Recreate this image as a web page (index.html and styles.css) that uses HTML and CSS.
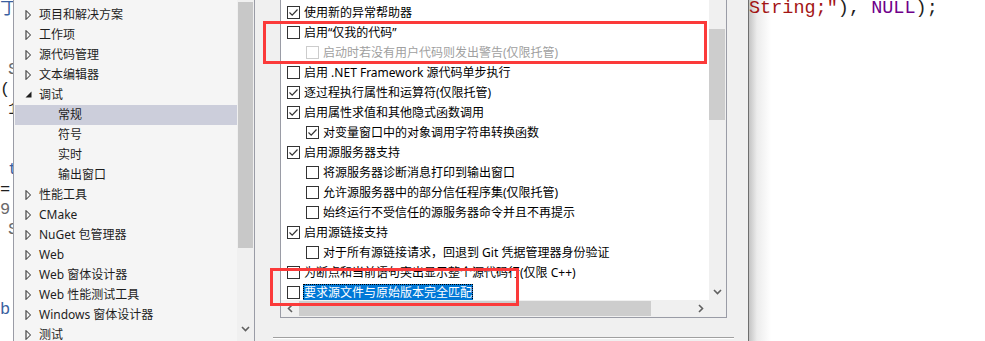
FILE: index.html
```html
<!DOCTYPE html>
<html lang="zh-CN">
<head>
    <meta charset="UTF-8">
    <title>选项 - 调试</title>
    <link rel="stylesheet" href="styles.css">
</head>
<body>
    <div class="screen">
        <!-- editor behind the dialog, left side -->
        <div class="code-left">
            <div class="cl-line"><span class="c-blue">丁</span></div>
            <div class="cl-line"></div>
            <div class="cl-line"></div>
            <div class="cl-line"><span class="c-gray ind">S</span></div>
            <div class="cl-line"><span class="c-dark">(</span></div>
            <div class="cl-line"><span class="c-dark ind">1</span></div>
            <div class="cl-line"></div>
            <div class="cl-line"></div>
            <div class="cl-line"><span class="c-blue ind">t</span></div>
            <div class="cl-line"><span class="c-dark">=</span></div>
            <div class="cl-line"><span class="c-gray">9</span></div>
            <div class="cl-line"><span class="c-gray ind">S</span></div>
            <div class="cl-line"></div>
            <div class="cl-line"></div>
            <div class="cl-line"></div>
            <div class="cl-line"><span class="c-blue">b</span></div>
        </div>

        <!-- options tree -->
        <div class="tree-pane">
            <ul class="tree">
                <li><span class="arrow"><svg width="7" height="10" viewBox="0 0 7 10"><polygon points="1,0.5 5.5,5 1,9.5" fill="none" stroke="#1e1e1e" stroke-width="1"/></svg></span>项目和解决方案</li>
                <li><span class="arrow"><svg width="7" height="10" viewBox="0 0 7 10"><polygon points="1,0.5 5.5,5 1,9.5" fill="none" stroke="#1e1e1e" stroke-width="1"/></svg></span>工作项</li>
                <li><span class="arrow"><svg width="7" height="10" viewBox="0 0 7 10"><polygon points="1,0.5 5.5,5 1,9.5" fill="none" stroke="#1e1e1e" stroke-width="1"/></svg></span>源代码管理</li>
                <li><span class="arrow"><svg width="7" height="10" viewBox="0 0 7 10"><polygon points="1,0.5 5.5,5 1,9.5" fill="none" stroke="#1e1e1e" stroke-width="1"/></svg></span>文本编辑器</li>
                <li><span class="arrow"><svg width="7" height="10" viewBox="0 0 7 10"><polygon points="6.5,1.5 6.5,7.5 0.5,7.5" fill="#1e1e1e"/></svg></span>调试</li>
                <li class="child selected">常规</li>
                <li class="child">符号</li>
                <li class="child">实时</li>
                <li class="child">输出窗口</li>
                <li><span class="arrow"><svg width="7" height="10" viewBox="0 0 7 10"><polygon points="1,0.5 5.5,5 1,9.5" fill="none" stroke="#1e1e1e" stroke-width="1"/></svg></span>性能工具</li>
                <li><span class="arrow"><svg width="7" height="10" viewBox="0 0 7 10"><polygon points="1,0.5 5.5,5 1,9.5" fill="none" stroke="#1e1e1e" stroke-width="1"/></svg></span>CMake</li>
                <li><span class="arrow"><svg width="7" height="10" viewBox="0 0 7 10"><polygon points="1,0.5 5.5,5 1,9.5" fill="none" stroke="#1e1e1e" stroke-width="1"/></svg></span>NuGet 包管理器</li>
                <li><span class="arrow"><svg width="7" height="10" viewBox="0 0 7 10"><polygon points="1,0.5 5.5,5 1,9.5" fill="none" stroke="#1e1e1e" stroke-width="1"/></svg></span>Web</li>
                <li><span class="arrow"><svg width="7" height="10" viewBox="0 0 7 10"><polygon points="1,0.5 5.5,5 1,9.5" fill="none" stroke="#1e1e1e" stroke-width="1"/></svg></span>Web 窗体设计器</li>
                <li><span class="arrow"><svg width="7" height="10" viewBox="0 0 7 10"><polygon points="1,0.5 5.5,5 1,9.5" fill="none" stroke="#1e1e1e" stroke-width="1"/></svg></span>Web 性能测试工具</li>
                <li><span class="arrow"><svg width="7" height="10" viewBox="0 0 7 10"><polygon points="1,0.5 5.5,5 1,9.5" fill="none" stroke="#1e1e1e" stroke-width="1"/></svg></span>Windows 窗体设计器</li>
                <li><span class="arrow"><svg width="7" height="10" viewBox="0 0 7 10"><polygon points="1,0.5 5.5,5 1,9.5" fill="none" stroke="#1e1e1e" stroke-width="1"/></svg></span>测试</li>
            </ul>
            <div class="vscroll tree-scroll">
                <div class="thumb"></div>
                <div class="spacer"></div>
                <div class="btn"><svg width="9" height="6" viewBox="0 0 9 6"><polyline points="1,1 4.5,4.5 8,1" fill="none" stroke="#606060" stroke-width="1.6"/></svg></div>
            </div>
        </div>

        <!-- dialog page: 调试 > 常规 -->
        <div class="dialog">
            <div class="list">
                <div class="list-body">
                    <ul class="options">
                        <li><span class="cb"><svg width="11" height="11" viewBox="0 0 11 11"><polyline points="1.5,5.5 4.2,8.2 9.5,2.5" fill="none" stroke="#333" stroke-width="1.2"/></svg></span>使用新的异常帮助器</li>
                        <li><span class="cb"></span>启用“仅我的代码”</li>
                        <li class="sub disabled"><span class="cb"></span>启动时若没有用户代码则发出警告(仅限托管)</li>
                        <li><span class="cb"></span>启用 .NET Framework 源代码单步执行</li>
                        <li><span class="cb"><svg width="11" height="11" viewBox="0 0 11 11"><polyline points="1.5,5.5 4.2,8.2 9.5,2.5" fill="none" stroke="#333" stroke-width="1.2"/></svg></span>逐过程执行属性和运算符(仅限托管)</li>
                        <li><span class="cb"><svg width="11" height="11" viewBox="0 0 11 11"><polyline points="1.5,5.5 4.2,8.2 9.5,2.5" fill="none" stroke="#333" stroke-width="1.2"/></svg></span>启用属性求值和其他隐式函数调用</li>
                        <li class="sub"><span class="cb"><svg width="11" height="11" viewBox="0 0 11 11"><polyline points="1.5,5.5 4.2,8.2 9.5,2.5" fill="none" stroke="#333" stroke-width="1.2"/></svg></span>对变量窗口中的对象调用字符串转换函数</li>
                        <li><span class="cb"><svg width="11" height="11" viewBox="0 0 11 11"><polyline points="1.5,5.5 4.2,8.2 9.5,2.5" fill="none" stroke="#333" stroke-width="1.2"/></svg></span>启用源服务器支持</li>
                        <li class="sub"><span class="cb"></span>将源服务器诊断消息打印到输出窗口</li>
                        <li class="sub"><span class="cb"></span>允许源服务器中的部分信任程序集(仅限托管)</li>
                        <li class="sub"><span class="cb"></span>始终运行不受信任的源服务器命令并且不再提示</li>
                        <li><span class="cb"><svg width="11" height="11" viewBox="0 0 11 11"><polyline points="1.5,5.5 4.2,8.2 9.5,2.5" fill="none" stroke="#333" stroke-width="1.2"/></svg></span>启用源链接支持</li>
                        <li class="sub"><span class="cb"></span>对于所有源链接请求，回退到 Git 凭据管理器身份验证</li>
                        <li><span class="cb"></span>为断点和当前语句突出显示整个源代码行(仅限 C++)</li>
                        <li><span class="cb"></span><span class="focused">要求源文件与原始版本完全匹配</span></li>
                    </ul>
                    <div class="vscroll">
                        <div class="thumb"></div>
                        <div class="spacer"></div>
                        <div class="btn"><svg width="9" height="6" viewBox="0 0 9 6"><polyline points="1,1 4.5,4.5 8,1" fill="none" stroke="#606060" stroke-width="1.6"/></svg></div>
                    </div>
                </div>
                <div class="hscroll">
                    <div class="btn"><svg width="6" height="9" viewBox="0 0 6 9"><polyline points="5,1 1.5,4.5 5,8" fill="none" stroke="#606060" stroke-width="1.6"/></svg></div>
                    <div class="thumb"></div>
                    <div class="spacer"></div>
                    <div class="btn"><svg width="6" height="9" viewBox="0 0 6 9"><polyline points="1,1 4.5,4.5 1,8" fill="none" stroke="#606060" stroke-width="1.6"/></svg></div>
                    <div class="corner"></div>
                </div>
            </div>
            <div class="dialog-rule"></div>
        </div>

        <!-- editor behind the dialog, right side -->
        <div class="code-right">
            <div class="code-line"><span class="c-str">String;"</span>), <span class="c-macro">NULL</span>);</div>
        </div>

        <!-- red annotation boxes -->
        <div class="mark mark-1"></div>
        <div class="mark mark-2"></div>
    </div>
</body>
</html>
```

FILE: styles.css
```css
/* Page */
body {
    margin: 0;
    padding: 0;
    font-family: "Noto Sans", "Noto Sans CJK SC", sans-serif;
    font-size: 12px;
    color: #000;
}

.screen {
    position: relative;
    width: 985px;
    height: 341px;
    overflow: hidden;
    display: flex;
    background-color: #f0f0f0;
}

ul {
    list-style: none;
    margin: 0;
    padding: 0;
}

/* Editor fragments on the left */
.code-left {
    width: 13px;
    flex-shrink: 0;
    background-color: #fff;
    overflow: hidden;
    font-family: "Liberation Mono", monospace;
    font-size: 17px;
}

.cl-line {
    height: 20px;
    line-height: 20px;
    white-space: nowrap;
}

.cl-line .ind {
    padding-left: 8px;
}

.c-blue { color: #3b5fa0; }
.c-gray { color: #6a6a6a; }
.c-dark { color: #1e1e1e; }

/* Tree pane */
.tree-pane {
    width: 240px;
    flex-shrink: 0;
    display: flex;
    background-color: #f5f5f5;
    border-left: 1px solid #9a9ca6;
    border-right: 1px solid #9a9ca6;
}

.tree {
    flex: 1;
    padding-top: 5px;
    color: #1e1e1e;
}

.tree li {
    height: 20px;
    line-height: 20px;
    display: flex;
    align-items: center;
    padding-left: 11px;
    white-space: nowrap;
}

.tree li .arrow {
    width: 14px;
    display: flex;
    align-items: center;
}

.tree li.child {
    padding-left: 44px;
}

.tree li.selected {
    background-color: #cccedb;
    margin-left: 1px;
    padding-left: 43px;
}

/* Scrollbars */
.vscroll {
    width: 17px;
    flex-shrink: 0;
    display: flex;
    flex-direction: column;
    background-color: #f0f0f0;
}

.vscroll .thumb {
    margin: 29px 1px 0 0;
    height: 91px;
    background-color: #cdcdcd;
}

.vscroll .spacer,
.hscroll .spacer {
    flex: 1;
}

.vscroll .btn,
.hscroll .btn {
    width: 17px;
    height: 17px;
    display: flex;
    align-items: center;
    justify-content: center;
}

.tree-scroll {
    padding-bottom: 4px;
}

.tree-scroll .thumb {
    margin: 2px 1px 0 1px;
    height: 246px;
    background-color: #c8c8c8;
}

/* Dialog page */
.dialog {
    width: 493px;
    flex-shrink: 0;
}

.list {
    margin-left: 25px;
    width: 445px;
    height: 317px;
    display: flex;
    flex-direction: column;
    background-color: #fff;
    border-left: 1px solid #9a9ca6;
    border-right: 1px solid #9a9ca6;
    border-bottom: 1px solid #9a9ca6;
}

.list-body {
    flex: 1;
    display: flex;
    min-height: 0;
}

.options {
    flex: 1;
    padding-top: 2px;
    overflow: hidden;
}

.options li {
    height: 20px;
    display: flex;
    align-items: center;
    padding-left: 6px;
    white-space: nowrap;
}

.options li.sub {
    padding-left: 25px;
}

.options .cb {
    width: 13px;
    height: 13px;
    box-sizing: border-box;
    border: 1px solid #333;
    background-color: #fff;
    margin-right: 4px;
    flex-shrink: 0;
    display: flex;
    align-items: center;
    justify-content: center;
}

.options li.disabled {
    color: #a0a0a0;
}

.options li.disabled .cb {
    border-color: #cccccc;
}

.options .focused {
    display: inline-block;
    height: 17px;
    line-height: 17px;
    margin-left: -1px;
    padding: 0 1px;
    background-color: #0078d7;
    color: #fff;
    outline: 1px dotted #000;
    outline-offset: -1px;
}

.hscroll {
    height: 17px;
    flex-shrink: 0;
    display: flex;
    background-color: #f0f0f0;
}

.hscroll .thumb {
    margin: 1px 0 1px 1px;
    width: 352px;
    background-color: #cdcdcd;
}

.hscroll .corner {
    width: 17px;
}

.dialog-rule {
    margin: 19px 0 0 18px;
    width: 461px;
    border-top: 1px solid #a0a0a0;
    border-bottom: 1px solid #fff;
}

/* Editor on the right */
.code-right {
    flex: 1;
    border-left: 1px solid #6e6e6e;
    background: linear-gradient(to right, #c4c4c4, #ececec 8px, #fff 22px);
}

.code-line {
    font-family: "Liberation Mono", monospace;
    font-size: 18.5px;
    line-height: 18px;
    white-space: pre;
    color: #1e1e1e;
}

.c-str { color: #a31515; }
.c-macro { color: #6f008a; }

/* Annotation boxes */
.mark {
    position: absolute;
    border: 3px solid #fb3a3a;
}

.mark-1 {
    left: 263px;
    top: 21px;
    width: 438px;
    height: 37px;
}

.mark-2 {
    left: 270px;
    top: 268px;
    width: 243px;
    height: 32px;
}
```
